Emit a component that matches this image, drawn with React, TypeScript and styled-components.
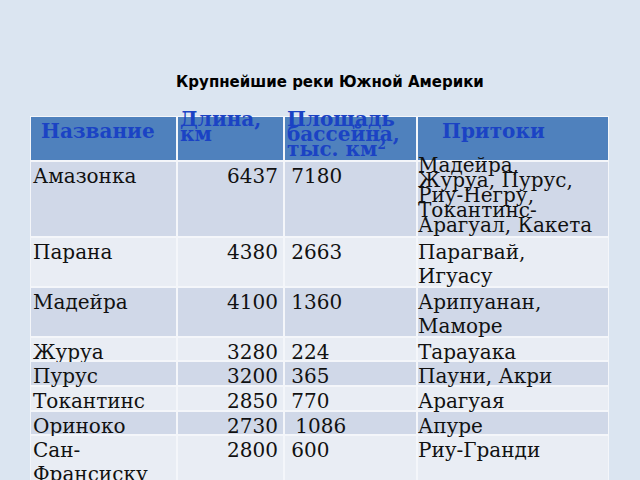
import React from 'react';
import styled, {createGlobalStyle} from 'styled-components';

type Tone = 'head' | 'dark' | 'light';

interface CellProps {
	$tone: Tone;
	$align?: 'left' | 'right';
	$pad?: string;
}

interface TextProps {
	$tight?: boolean;
	$lift?: number;
}

interface River {
	name: React.ReactNode;
	length: string;
	area: string;
	tributaries: React.ReactNode;
	tight?: boolean;
}

const GlobalStyle = createGlobalStyle`
  html, body {
    margin: 0;
    padding: 0;
    background: #dbe5f1;
  }
  body {
    width: 640px;
    height: 480px;
    overflow: hidden;
  }
`

const Page = styled.div`
  width: 640px;
  height: 480px;
  padding-top: 74px;
  box-sizing: border-box;
  background: #dbe5f1;
  overflow: hidden;
`

const Title = styled.h1`
  margin: 0 0 25px 20px;
  text-align: center;
  font-family: "DejaVu Sans", sans-serif;
  font-weight: bold;
  font-size: 15px;
  line-height: 17px;
  color: #000;
`

const Table = styled.div`
  margin-left: 30px;
  width: 579px;
  padding: 1px;
  box-sizing: border-box;
  display: grid;
  grid-template-columns: 145px 105px 131px 190px;
  grid-template-rows: 43px 74px 48px 48px 22px 23px 23px 22px 50px;
  gap: 2px;
  background: #f4f6fa;
`

const toneColor: Record<Tone, string> = {
	head: '#4f81bd',
	dark: '#d0d8e8',
	light: '#e9edf4',
};

const Cell = styled.div<CellProps>`
  background: ${props => toneColor[props.$tone]};
  padding: ${props => props.$pad || '2px 0 0 2px'};
  text-align: ${props => props.$align || 'left'};
  overflow: visible;
  font-family: "DejaVu Serif", serif;
  font-size: 20px;
  line-height: 24px;
  color: ${props => props.$tone === 'head' ? '#1b43c4' : '#111'};
  font-weight: ${props => props.$tone === 'head' ? 'bold' : 'normal'};
  white-space: pre;
`

const CellText = styled.div<TextProps>`
  line-height: ${props => props.$tight ? '15px' : '24px'};
  margin-top: ${props => props.$lift ? `-${props.$lift}px` : '0'};
  position: relative;
`

const Sup = styled.sup`
  font-size: 12px;
  line-height: 0;
  vertical-align: 7px;
`

const rivers: River[] = [
	{
		name: 'Амазонка',
		length: '6437',
		area: ' 7180',
		tributaries: <>Мадейра,<br/>Журуа, Пурус,<br/>Риу-Негру,<br/>Токантинс-<br/>Арагуал, Какета</>,
		tight: true,
	},
	{name: 'Парана', length: '4380', area: ' 2663', tributaries: <>Парагвай,<br/>Игуасу</>},
	{name: 'Мадейра', length: '4100', area: ' 1360', tributaries: <>Арипуанан,<br/>Маморе</>},
	{name: 'Журуа', length: '3280', area: ' 224', tributaries: 'Тарауака'},
	{name: 'Пурус', length: '3200', area: ' 365', tributaries: 'Пауни, Акри'},
	{name: 'Токантинс', length: '2850', area: ' 770', tributaries: 'Арагуая'},
	{name: 'Ориноко', length: '2730', area: ' \u20091086', tributaries: 'Апуре'},
	{name: <>Сан-<br/>Франсиску</>, length: '2800', area: ' 600', tributaries: 'Риу-Гранди'},
];

export default function App() {
	return (
		<>
			<GlobalStyle/>
			<Page>
				<Title>Крупнейшие реки Южной Америки</Title>
				<Table>
					<Cell $tone="head" $pad="2px 0 0 10px">Название</Cell>
					<Cell $tone="head">
						<CellText $tight $lift={7}>Длина,<br/>км</CellText>
					</Cell>
					<Cell $tone="head">
						<CellText $tight $lift={7}>Площадь<br/>бассейна,<br/>тыс. км<Sup>2</Sup></CellText>
					</Cell>
					<Cell $tone="head" $pad="2px 0 0 24px">Притоки</Cell>

					{rivers.map((river, i) => {
						const tone: Tone = i % 2 === 0 ? 'dark' : 'light';
						return (
							<React.Fragment key={i}>
								<Cell $tone={tone}>{river.name}</Cell>
								<Cell $tone={tone} $align="right" $pad="2px 5px 0 0">{river.length}</Cell>
								<Cell $tone={tone} $pad="2px 0 0 0">{river.area}</Cell>
								<Cell $tone={tone} $pad={river.tight ? '0' : '2px 0 0 0'}>
									<CellText $tight={river.tight} $lift={river.tight ? 4 : 0}>
										{river.tributaries}
									</CellText>
								</Cell>
							</React.Fragment>
						);
					})}
				</Table>
			</Page>
		</>
	);
}
